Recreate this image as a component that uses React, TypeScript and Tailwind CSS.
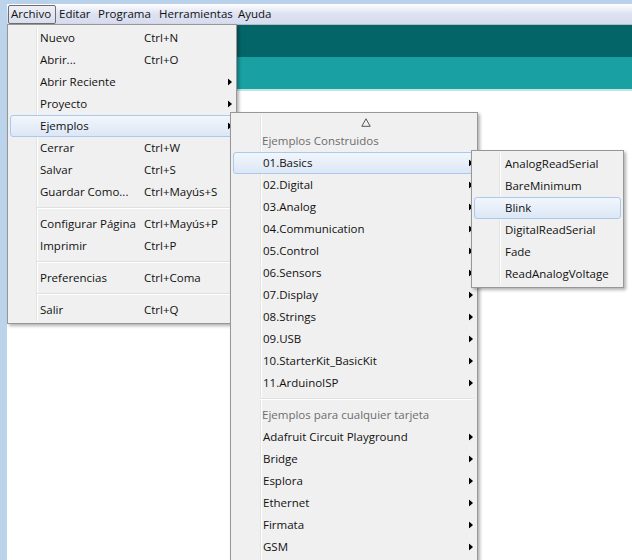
import React from "react";

const Arrow = () => (
  <svg width="4" height="7" viewBox="0 0 4 7" className="block">
    <path d="M0 0 L4 3.5 L0 7 Z" fill="#000" />
  </svg>
);

type Item =
  | { kind: "item"; label: string; shortcut?: string; sub?: boolean; hl?: boolean }
  | { kind: "sep" }
  | { kind: "header"; label: string }
  | { kind: "scroll" };

function Row({ it, textPad, labelW }: { it: Item; textPad: string; labelW?: string }) {
  if (it.kind === "sep") {
    return (
      <div className="h-[10px] flex flex-col justify-center pl-[27px] pr-[2px]">
        <div className="h-px bg-[#e0e0e0]" />
        <div className="h-px bg-white" />
      </div>
    );
  }
  if (it.kind === "scroll") {
    return (
      <div className="h-[15px] flex items-center justify-center pl-[24px]">
        <svg width="10" height="9" viewBox="0 0 10 9" className="block">
          <path d="M5 0.8 L9.2 8.3 L0.8 8.3 Z" fill="none" stroke="#555" strokeWidth="1" />
        </svg>
      </div>
    );
  }
  if (it.kind === "header") {
    return (
      <div className={`h-[22px] flex items-center pb-[1px] ${textPad} text-[#6d6d6d]`}>{it.label}</div>
    );
  }
  return (
    <div
      className={`relative h-[22px] flex items-center pb-[1px] ${textPad} ${
        it.hl
          ? "rounded-[3px] border border-[#a9c9ef] bg-gradient-to-b from-[#f2f6fc] to-[#dce7f5]"
          : "border border-transparent"
      }`}
    >
      <span className={labelW ? `${labelW} shrink-0` : ""}>{it.label}</span>
      {it.shortcut && <span>{it.shortcut}</span>}
      {it.sub && (
        <span className="absolute right-[1px] top-1/2 -translate-y-1/2">
          <Arrow />
        </span>
      )}
    </div>
  );
}

const archivo: Item[] = [
  { kind: "item", label: "Nuevo", shortcut: "Ctrl+N" },
  { kind: "item", label: "Abrir...", shortcut: "Ctrl+O" },
  { kind: "item", label: "Abrir Reciente", sub: true },
  { kind: "item", label: "Proyecto", sub: true },
  { kind: "item", label: "Ejemplos", sub: true, hl: true },
  { kind: "item", label: "Cerrar", shortcut: "Ctrl+W" },
  { kind: "item", label: "Salvar", shortcut: "Ctrl+S" },
  { kind: "item", label: "Guardar Como...", shortcut: "Ctrl+Mayús+S" },
  { kind: "sep" },
  { kind: "item", label: "Configurar Página", shortcut: "Ctrl+Mayús+P" },
  { kind: "item", label: "Imprimir", shortcut: "Ctrl+P" },
  { kind: "sep" },
  { kind: "item", label: "Preferencias", shortcut: "Ctrl+Coma" },
  { kind: "sep" },
  { kind: "item", label: "Salir", shortcut: "Ctrl+Q" },
];

const ejemplos: Item[] = [
  { kind: "scroll" },
  { kind: "header", label: "Ejemplos Construidos" },
  { kind: "item", label: "01.Basics", sub: true, hl: true },
  { kind: "item", label: "02.Digital", sub: true },
  { kind: "item", label: "03.Analog", sub: true },
  { kind: "item", label: "04.Communication", sub: true },
  { kind: "item", label: "05.Control", sub: true },
  { kind: "item", label: "06.Sensors", sub: true },
  { kind: "item", label: "07.Display", sub: true },
  { kind: "item", label: "08.Strings", sub: true },
  { kind: "item", label: "09.USB", sub: true },
  { kind: "item", label: "10.StarterKit_BasicKit", sub: true },
  { kind: "item", label: "11.ArduinoISP", sub: true },
  { kind: "sep" },
  { kind: "header", label: "Ejemplos para cualquier tarjeta" },
  { kind: "item", label: "Adafruit Circuit Playground", sub: true },
  { kind: "item", label: "Bridge", sub: true },
  { kind: "item", label: "Esplora", sub: true },
  { kind: "item", label: "Ethernet", sub: true },
  { kind: "item", label: "Firmata", sub: true },
  { kind: "item", label: "GSM", sub: true },
];

const basics: Item[] = [
  { kind: "item", label: "AnalogReadSerial" },
  { kind: "item", label: "BareMinimum" },
  { kind: "item", label: "Blink", hl: true },
  { kind: "item", label: "DigitalReadSerial" },
  { kind: "item", label: "Fade" },
  { kind: "item", label: "ReadAnalogVoltage" },
];

function Menu({
  items,
  className,
  gutter,
  textPad,
  labelW,
}: {
  items: Item[];
  className: string;
  gutter: string;
  textPad: string;
  labelW?: string;
}) {
  return (
    <div
      className={`absolute bg-[#f0f0f0] border border-[#979797] p-[2px] shadow-[2px_2px_3px_rgba(0,0,0,0.3)] ${className}`}
    >
      <div className={`absolute top-[2px] bottom-[2px] w-[2px] flex ${gutter}`}>
        <div className="w-px bg-[#e2e3e3]" />
        <div className="w-px bg-white" />
      </div>
      <div className="relative flex flex-col">
        {items.map((it, i) => (
          <Row key={i} it={it} textPad={textPad} labelW={labelW} />
        ))}
      </div>
    </div>
  );
}

export default function App() {
  const bar = ["Editar", "Programa", "Herramientas", "Ayuda"];
  const barW = ["w-[39px]", "w-[61px]", "w-[79px]", "w-[40px]"];
  return (
    <div className="relative w-[632px] h-[560px] overflow-hidden bg-white flex font-['Open_Sans','Noto_Sans',sans-serif] text-[11.5px] text-[#111] leading-none">
      <div className="w-[7px] h-full bg-[#bcd3ec] shrink-0" />
      <div className="flex-1 flex flex-col">
        <div className="h-[4px] bg-[#b9d1ea]" />
        <div className="h-[20px] bg-gradient-to-b from-white via-[#dde2f2] to-[#d6dbee] flex items-center pl-[1px] pb-[1px]">
          <div className="w-[48px] h-[19px] mt-px rounded-[2px] border border-[#6f6f6f] bg-gradient-to-b from-[#eef0f7] to-[#d9deee] flex items-center pl-[2px] pb-[1px]">
            Archivo
          </div>
          {bar.map((b, i) => (
            <div key={b} className={`${barW[i]} pl-[3px] shrink-0`}>
              {b}
            </div>
          ))}
        </div>
        <div className="h-px bg-[#b7b9c2]" />
        <div className="h-[32px] bg-[#046569]" />
        <div className="h-[32px] bg-[#18a0a3]" />
        <div className="h-[2px] bg-[#bfe5e6]" />
        <div className="flex-1 bg-white" />
      </div>

      <Menu
        items={archivo}
        className="left-[7px] top-[24px] w-[230px]"
        gutter="left-[28px]"
        textPad="pl-[29px]"
        labelW="w-[104px]"
      />
      <Menu
        items={ejemplos}
        className="left-[230px] top-[112px] w-[248px] h-[460px]"
        gutter="left-[29px]"
        textPad="pl-[29px]"
      />
      <Menu
        items={basics}
        className="left-[471px] top-[150px] w-[153px]"
        gutter="left-[27px]"
        textPad="pl-[30px]"
      />
    </div>
  );
}
